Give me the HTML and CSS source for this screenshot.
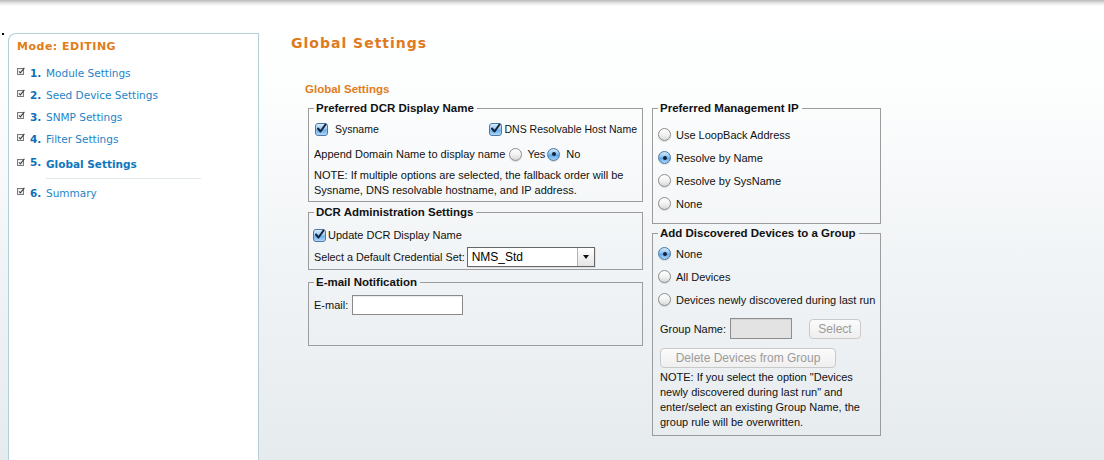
FILE: index.html
```html
<!DOCTYPE html>
<html>
<head>
<meta charset="utf-8">
<title>Global Settings</title>
<link rel="stylesheet" href="styles.css">
</head>
<body>
<div class="topshadow"></div>
<div class="page">
  <div class="dot"></div>
  <aside class="sidebar">
    <div class="mode">Mode: EDITING</div>
    <ul class="steps">
      <li class="step"><svg class="sicon" width="8" height="8" viewBox="0 0 8 8"><rect x="0.5" y="1.5" width="6" height="6" fill="#f2f2f2" stroke="#7a7a7a"/><path d="M2 4.3 L3.4 5.8 L7.4 0.8" stroke="#444" stroke-width="1.1" fill="none"/></svg><span class="num">1.</span><span class="lbl">Module Settings</span></li>
      <li class="step"><svg class="sicon" width="8" height="8" viewBox="0 0 8 8"><rect x="0.5" y="1.5" width="6" height="6" fill="#f2f2f2" stroke="#7a7a7a"/><path d="M2 4.3 L3.4 5.8 L7.4 0.8" stroke="#444" stroke-width="1.1" fill="none"/></svg><span class="num">2.</span><span class="lbl">Seed Device Settings</span></li>
      <li class="step"><svg class="sicon" width="8" height="8" viewBox="0 0 8 8"><rect x="0.5" y="1.5" width="6" height="6" fill="#f2f2f2" stroke="#7a7a7a"/><path d="M2 4.3 L3.4 5.8 L7.4 0.8" stroke="#444" stroke-width="1.1" fill="none"/></svg><span class="num">3.</span><span class="lbl">SNMP Settings</span></li>
      <li class="step"><svg class="sicon" width="8" height="8" viewBox="0 0 8 8"><rect x="0.5" y="1.5" width="6" height="6" fill="#f2f2f2" stroke="#7a7a7a"/><path d="M2 4.3 L3.4 5.8 L7.4 0.8" stroke="#444" stroke-width="1.1" fill="none"/></svg><span class="num">4.</span><span class="lbl">Filter Settings</span></li>
      <li class="step current"><svg class="sicon" width="8" height="8" viewBox="0 0 8 8"><rect x="0.5" y="1.5" width="6" height="6" fill="#f2f2f2" stroke="#7a7a7a"/><path d="M2 4.3 L3.4 5.8 L7.4 0.8" stroke="#444" stroke-width="1.1" fill="none"/></svg><span class="num">5.</span><span class="lbl">Global Settings</span></li>
      <li class="sep"></li>
      <li class="step"><svg class="sicon" width="8" height="8" viewBox="0 0 8 8"><rect x="0.5" y="1.5" width="6" height="6" fill="#f2f2f2" stroke="#7a7a7a"/><path d="M2 4.3 L3.4 5.8 L7.4 0.8" stroke="#444" stroke-width="1.1" fill="none"/></svg><span class="num">6.</span><span class="lbl">Summary</span></li>
    </ul>
  </aside>
  <main class="main">
    <h1 class="title">Global Settings</h1>
    <h2 class="subtitle">Global Settings</h2>
    <div class="form">
      <div class="col col-left">
        <fieldset class="fs fs-name">
          <legend>Preferred DCR Display Name</legend>
          <div class="row row-checks">
            <label class="opt opt-sys"><span class="cb"><svg width="11" height="11" viewBox="0 0 11 11"><path d="M2 5.5 L4.5 8.5 L9.5 1.5" stroke="#13243d" stroke-width="2" fill="none" stroke-linecap="round" stroke-linejoin="round"/></svg></span>Sysname</label>
            <label class="opt opt-dns"><span class="cb"><svg width="11" height="11" viewBox="0 0 11 11"><path d="M2 5.5 L4.5 8.5 L9.5 1.5" stroke="#13243d" stroke-width="2" fill="none" stroke-linecap="round" stroke-linejoin="round"/></svg></span>DNS Resolvable Host Name</label>
          </div>
          <div class="row row-append">
            <span>Append Domain Name to display name</span>
            <span class="rb rb-yes"></span><span class="yes">Yes</span>
            <span class="rb on rb-no"></span><span class="no">No</span>
          </div>
          <p class="note">NOTE: If multiple options are selected, the fallback order will be<br>Sysname, DNS resolvable hostname, and IP address.</p>
        </fieldset>
        <fieldset class="fs fs-admin">
          <legend>DCR Administration Settings</legend>
          <div class="row row-update">
            <span class="cb"><svg width="11" height="11" viewBox="0 0 11 11"><path d="M2 5.5 L4.5 8.5 L9.5 1.5" stroke="#13243d" stroke-width="2" fill="none" stroke-linecap="round" stroke-linejoin="round"/></svg></span><span class="upd">Update DCR Display Name</span>
          </div>
          <div class="row row-select">
            <span class="sel-label">Select a Default Credential Set:</span>
            <div class="select"><span class="select-val">NMS_Std</span><span class="select-btn"><span class="tri"></span></span></div>
          </div>
        </fieldset>
        <fieldset class="fs fs-mail">
          <legend>E-mail Notification</legend>
          <div class="row row-mail">
            <span>E-mail:</span><span class="input mail-input"></span>
          </div>
        </fieldset>
      </div>
      <div class="col col-right">
        <fieldset class="fs fs-ip">
          <legend>Preferred Management IP</legend>
          <div class="radios">
            <div class="ritem"><span class="rb"></span>Use LoopBack Address</div>
            <div class="ritem"><span class="rb on"></span>Resolve by Name</div>
            <div class="ritem"><span class="rb"></span>Resolve by SysName</div>
            <div class="ritem"><span class="rb"></span>None</div>
          </div>
        </fieldset>
        <fieldset class="fs fs-group">
          <legend>Add Discovered Devices to a Group</legend>
          <div class="radios radios-group">
            <div class="ritem"><span class="rb on"></span>None</div>
            <div class="ritem"><span class="rb"></span>All Devices</div>
            <div class="ritem"><span class="rb"></span>Devices newly discovered during last run</div>
          </div>
          <div class="row row-gname">
            <span class="gname-label">Group Name:</span><span class="input gname-input"></span><span class="btn btn-select">Select</span>
          </div>
          <div class="row row-delete"><span class="btn btn-delete">Delete Devices from Group</span></div>
          <p class="note note-group">NOTE: If you select the option "Devices<br>newly discovered during last run" and<br>enter/select an existing Group Name, the<br>group rule will be overwritten.</p>
        </fieldset>
      </div>
    </div>
  </main>
</div>
</body>
</html>
```

FILE: styles.css
```css
html, body {
  margin: 0;
  padding: 0;
  height: 100%;
  overflow: hidden;
}
body {
  background: linear-gradient(to bottom, #ffffff 0px, #fdfefe 80px, #f1f4f6 260px, #e6ebee 460px);
  font-family: "Liberation Sans", Arial, sans-serif;
  font-size: 11px;
  color: #111;
}
.topshadow {
  height: 6px;
  background: linear-gradient(to bottom, #b9b9b9 0px, #d8d8d8 2px, #efefef 4px, rgba(255,255,255,0) 6px);
}
.page {
  display: flex;
  padding-top: 27px;
}
.dot {
  width: 2px;
  height: 2px;
  background: #000;
  margin-left: 2px;
  flex: none;
}
.sidebar {
  flex: none;
  margin-left: 4px;
  width: 251px;
  height: 440px;
  box-sizing: border-box;
  background: #fff;
  border: 1px solid #b3ced8;
  border-bottom: none;
  border-top-left-radius: 8px;
  padding: 6px 0 0 8px;
  font-family: "DejaVu Sans", Verdana, sans-serif;
}
.mode {
  font-size: 11px;
  line-height: 14px;
  font-weight: bold;
  color: #e07d16;
  letter-spacing: 0.5px;
}
.steps {
  list-style: none;
  margin: 8px 0 0;
  padding: 0;
}
.step {
  display: flex;
  align-items: center;
  height: 22px;
  font-size: 10.5px;
}
.sicon {
  flex: none;
  margin-right: 5px;
  margin-top: -4px;
}
.num {
  width: 16px;
  font-weight: bold;
  color: #0d6fb6;
}
.lbl {
  color: #1d84c8;
}
.step.current {
  margin-top: 2px;
  height: 23px;
}
.step.current .lbl {
  font-weight: bold;
  color: #0f77bd;
  margin-top: 1px;
}
.step.current .num {
  margin-top: -3px;
}
.sep {
  height: 1px;
  width: 155px;
  margin: 3px 0 3px 29px;
  background: #dfe7eb;
}
.main {
  padding-left: 32px;
}
.title {
  margin: 0;
  padding-top: 1px;
  font-family: "DejaVu Sans", Verdana, sans-serif;
  font-size: 14px;
  line-height: 18px;
  letter-spacing: 1px;
  font-weight: bold;
  color: #de7b1f;
}
.subtitle {
  margin: 30px 0 0 14px;
  font-size: 11.5px;
  line-height: 14px;
  font-weight: bold;
  color: #e07c1c;
}
.form {
  display: flex;
  align-items: flex-start;
  gap: 9px;
  margin: 5px 0 0 17px;
}
.col-left { width: 335px; }
.col-right { width: 229px; }
.fs {
  box-sizing: border-box;
  width: 100%;
  margin: 0;
  padding: 0 5px;
  border: 1px solid #9c9c9c;
  min-width: 0;
}
.fs legend {
  padding: 0 3px 0 2px;
  font-size: 11.5px;
  line-height: 14px;
  font-weight: bold;
  color: #111;
}
.row {
  display: flex;
  align-items: center;
  white-space: nowrap;
}
.opt {
  display: flex;
  align-items: center;
}
.cb {
  flex: none;
  box-sizing: border-box;
  width: 13px;
  height: 13px;
  border: 1px solid #4d77a6;
  border-radius: 3px;
  background: linear-gradient(to bottom, #d6ebfb 0%, #9ccbf2 45%, #6aaeea 55%, #a9d5f7 100%);
  display: inline-flex;
  align-items: center;
  justify-content: center;
  box-shadow: inset 0 0 1px rgba(255,255,255,0.8);
}
.cb svg { margin-top: -1px; }
.rb {
  flex: none;
  box-sizing: border-box;
  width: 13px;
  height: 13px;
  border: 1px solid #8d8d8d;
  border-radius: 50%;
  background: linear-gradient(to bottom, #ffffff 0%, #f2f2f2 50%, #d8d8d8 100%);
  display: inline-flex;
  align-items: center;
  justify-content: center;
  box-shadow: 0 1px 1px rgba(0,0,0,0.12);
}
.rb.on {
  border-color: #4b77a6;
  background: linear-gradient(to bottom, #d3e9fb 0%, #90c4f0 45%, #5ea6e6 55%, #a8d4f7 100%);
}
.rb.on::after {
  content: "";
  width: 4px;
  height: 4px;
  border-radius: 50%;
  background: #132238;
}
/* fieldset 1 */
.row-checks {
  justify-content: space-between;
  height: 20px;
  margin-top: 4px;
  font-size: 10.5px;
}
.opt-sys { padding-left: 1px; }
.opt-sys .cb { margin-right: 7px; }
.opt-dns .cb { margin-right: 3px; }
.row-append {
  height: 20px;
  margin-top: 5px;
}
.rb-yes { margin-left: 4px; }
.yes { margin-left: 5px; }
.rb-no { margin-left: 2px; }
.no { margin-left: 6px; }
.note {
  margin: 4px 0 0;
  line-height: 15px;
}
.fs-name { padding-bottom: 3px; }
/* fieldset 2 */
.fs-admin {
  margin-top: 3px;
  padding-bottom: 2px;
}
.row-update {
  height: 18px;
  margin-top: 7px;
}
.row-update .cb { margin-left: -1px; margin-right: 2px; }
.row-select {
  height: 20px;
  margin-top: 3px;
}
.sel-label { font-size: 10.8px; }
.select {
  box-sizing: border-box;
  display: flex;
  margin-left: 2px;
  width: 128px;
  height: 20px;
  border: 1px solid #666;
  background: #fff;
  box-shadow: 1px 1px 0 rgba(0,0,0,0.08);
}
.select-val {
  flex: 1;
  padding-left: 4px;
  font-size: 12px;
  line-height: 18px;
  color: #000;
}
.select-btn {
  box-sizing: border-box;
  width: 17px;
  height: 18px;
  border-left: 1px solid #b4b4b4;
  background: linear-gradient(to bottom, #ffffff, #e4e4e4);
  display: flex;
  align-items: center;
  justify-content: center;
}
.tri {
  width: 0;
  height: 0;
  border-left: 3.5px solid transparent;
  border-right: 3.5px solid transparent;
  border-top: 4px solid #111;
}
/* fieldset 3 */
.fs-mail {
  margin-top: 5px;
  padding-bottom: 30px;
}
.row-mail {
  height: 20px;
  margin-top: 6px;
}
.input {
  box-sizing: border-box;
  display: inline-block;
  height: 20px;
  border: 1px solid #8a8a8a;
  background: #fff;
  box-shadow: inset 0 1px 1px rgba(0,0,0,0.08);
}
.mail-input {
  width: 111px;
  margin-left: 4px;
}
/* right column */
.fs-ip { padding-bottom: 8px; }
.radios { padding-top: 8px; }
.ritem {
  display: flex;
  align-items: center;
  height: 23px;
  white-space: nowrap;
}
.ritem .rb { margin-right: 5px; }
.fs-group {
  margin-top: 2px;
  padding-bottom: 5px;
}
.radios-group { padding-top: 2px; }
.row-gname {
  height: 21px;
  margin-top: 7px;
  padding-left: 2px;
}
.gname-input {
  width: 62px;
  height: 21px;
  margin-left: 4px;
  background: #e3e3e3;
  border-color: #8e8e8e;
}
.btn {
  box-sizing: border-box;
  display: inline-flex;
  align-items: center;
  justify-content: center;
  height: 20px;
  border: 1px solid #c9c9c9;
  border-radius: 4px;
  background: linear-gradient(to bottom, #fbfbfb, #efefef);
  color: #9b9b9b;
  font-size: 12px;
}
.btn-select {
  width: 52px;
  margin-left: 17px;
}
.row-delete {
  margin-top: 9px;
  padding-left: 2px;
}
.btn-delete { width: 176px; }
.note-group {
  margin: 2px 0 0 2px;
}
```
